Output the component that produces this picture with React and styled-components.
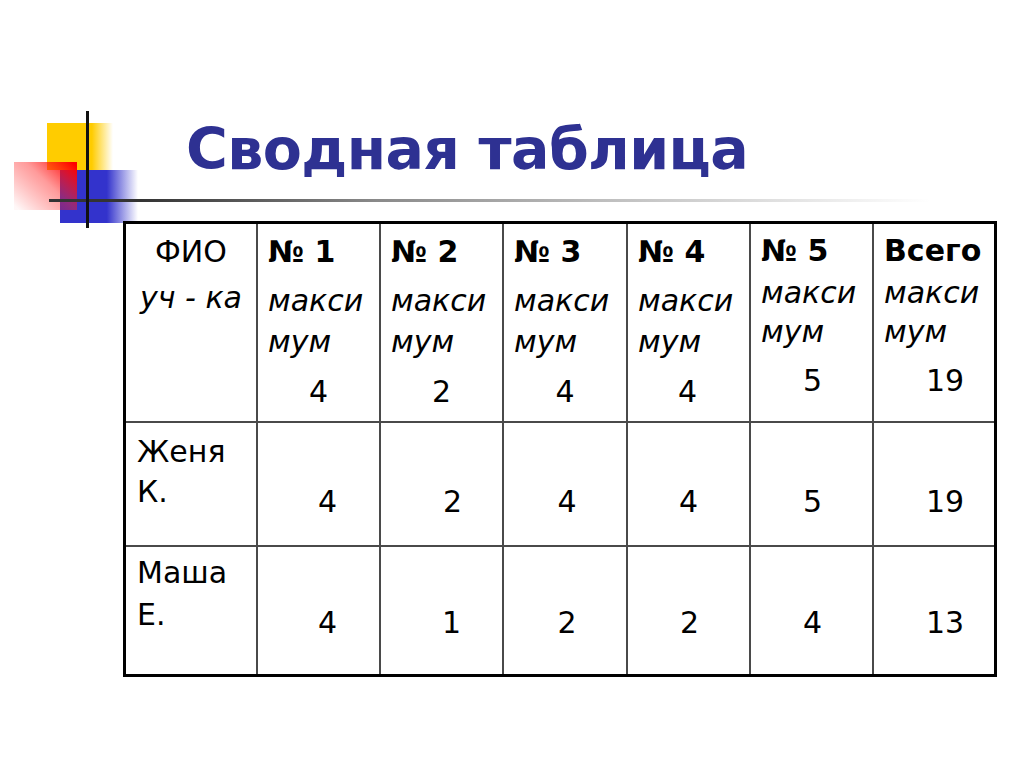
import React from "react";
import styled, { createGlobalStyle } from "styled-components";

const GlobalStyle = createGlobalStyle`
	html, body {
		margin: 0;
		padding: 0;
		background: #ffffff;
	}
	body {
		font-family: "DejaVu Sans", Verdana, sans-serif;
		color: #000000;
	}
`;

const Slide = styled.div`
	width: 1024px;
	height: 768px;
	box-sizing: border-box;
	padding-top: 111px;
	display: flex;
	flex-direction: column;
	background: #ffffff;
	overflow: hidden;
`;

const Header = styled.header`
	display: flex;
	align-items: flex-start;
	height: 110px;
	padding-left: 14px;
`;

const LogoSvg = styled.svg`
	flex-shrink: 0;
	overflow: visible;
	display: block;
`;

const TitleColumn = styled.div`
	flex: 1;
	display: flex;
	flex-direction: column;
	padding-top: 10px;
`;

const Title = styled.h1`
	margin: 0 0 0 46px;
	font-family: "DejaVu Sans", Verdana, sans-serif;
	font-weight: 700;
	font-size: 57px;
	line-height: 57px;
	letter-spacing: -0.6px;
	color: #2e3192;
	white-space: nowrap;
`;

const Rule = styled.div`
	margin-top: 21px;
	width: 790px;
	height: 3px;
	background: linear-gradient(
		to right,
		#333333 0%,
		#8a8a8a 30%,
		#bdbdbd 58%,
		#ffffff 100%
	);
`;

const Table = styled.div`
	margin-left: 123px;
	width: 874px;
	box-sizing: border-box;
	border: 3px solid #000000;
	display: grid;
	grid-template-columns: 130px 121px 121px 122px 121px 121px 120px;
	grid-template-rows: 197px 122px 127px;
	gap: 2px;
	background: #4a4a4a;
	font-size: 30px;
`;

const Cell = styled.div`
	background: #ffffff;
	box-sizing: border-box;
	padding-top: ${(props) => props.$pad || 0}px;
	min-width: 0;
`;

const NameHead = styled(Cell)`
	text-align: center;
	line-height: 46px;
`;

const Italic = styled.div`
	font-style: italic;
	white-space: nowrap;
`;

const Head = styled.div`
	font-weight: 700;
	line-height: 40px;
	padding-left: 10px;
	white-space: nowrap;
`;

const Note = styled.div`
	font-style: italic;
	line-height: ${(props) => (props.$tight ? 39 : 40)}px;
	margin-top: ${(props) => props.$gap}px;
	padding-left: 10px;
	white-space: nowrap;
`;

const Value = styled.div`
	text-align: center;
	line-height: 40px;
	margin-top: ${(props) => props.$gap || 0}px;
	padding-left: ${(props) => Math.max(0, props.$dx * 2)}px;
	padding-right: ${(props) => Math.max(0, -props.$dx * 2)}px;
`;

const Name = styled(Cell)`
	padding-left: 11px;
	line-height: ${(props) => props.$lh}px;
`;

const columns = [
	{ label: "№ 1", max: 4, dx: 0 },
	{ label: "№ 2", max: 2, dx: 0 },
	{ label: "№ 3", max: 4, dx: 0 },
	{ label: "№ 4", max: 4, dx: -1 },
	{ label: "№ 5", max: 5, dx: 1, tight: true },
	{ label: "Всего", max: 19, dx: 11, tight: true },
];

const rows = [
	{
		name: ["Женя", "К."],
		lh: 40,
		pad: 9,
		numPad: 59,
		values: [
			[4, 9],
			[2, 11],
			[4, 2],
			[4, 0],
			[5, 1],
			[19, 11],
		],
	},
	{
		name: ["Маша", "Е."],
		lh: 42,
		pad: 5,
		numPad: 56,
		values: [
			[4, 9],
			[1, 10],
			[2, 2],
			[2, 1],
			[4, 1],
			[13, 11],
		],
	},
];

const Logo = () => (
	<LogoSvg width="126" height="118" viewBox="0 0 126 118">
		<defs>
			<linearGradient id="fadeYellow" x1="0" y1="0" x2="1" y2="0">
				<stop offset="0" stopColor="#ffcc00" />
				<stop offset="0.68" stopColor="#ffcc00" />
				<stop offset="1" stopColor="#ffcc00" stopOpacity="0" />
			</linearGradient>
			<linearGradient id="fadeBlue" x1="0" y1="0" x2="1" y2="0">
				<stop offset="0" stopColor="#3333cc" />
				<stop offset="0.6" stopColor="#3333cc" />
				<stop offset="1" stopColor="#3333cc" stopOpacity="0" />
			</linearGradient>
			<linearGradient id="fadeRed" x1="0" y1="0.9" x2="1" y2="0.1">
				<stop offset="0" stopColor="#ff0000" stopOpacity="0.03" />
				<stop offset="0.55" stopColor="#ff2020" stopOpacity="0.45" />
				<stop offset="1" stopColor="#ff0000" stopOpacity="1" />
			</linearGradient>
		</defs>
		<rect x="33" y="12" width="66" height="47" fill="url(#fadeYellow)" />
		<rect x="46" y="59" width="78" height="53" fill="url(#fadeBlue)" />
		<rect x="0" y="51" width="63" height="48" fill="url(#fadeRed)" />
		<rect x="35" y="88" width="91" height="3" fill="#333333" />
		<rect x="72" y="0" width="3" height="117" fill="#111111" />
	</LogoSvg>
);

const App = () => {
	return (
		<>
			<GlobalStyle />
			<Slide>
				<Header>
					<Logo />
					<TitleColumn>
						<Title>Сводная таблица</Title>
						<Rule />
					</TitleColumn>
				</Header>

				<Table>
					<NameHead $pad={5}>
						<div>ФИО</div>
						<Italic>уч - ка</Italic>
					</NameHead>
					{columns.map((col, index) => (
						<Cell key={index} $pad={col.tight ? 7 : 8}>
							<Head>{col.label}</Head>
							<Note $gap={col.tight ? 2 : 9} $tight={col.tight}>
								макси
							</Note>
							<Note $gap={col.tight ? 0 : 1} $tight={col.tight}>
								мум
							</Note>
							<Value $gap={10} $dx={col.dx}>
								{col.max}
							</Value>
						</Cell>
					))}

					{rows.map((row) => (
						<React.Fragment key={row.name[0]}>
							<Name $pad={row.pad} $lh={row.lh}>
								<div>{row.name[0]}</div>
								<div>{row.name[1]}</div>
							</Name>
							{row.values.map(([v, dx], index) => (
								<Cell key={index} $pad={row.numPad}>
									<Value $dx={dx}>{v}</Value>
								</Cell>
							))}
						</React.Fragment>
					))}
				</Table>
			</Slide>
		</>
	);
};

export default App;
